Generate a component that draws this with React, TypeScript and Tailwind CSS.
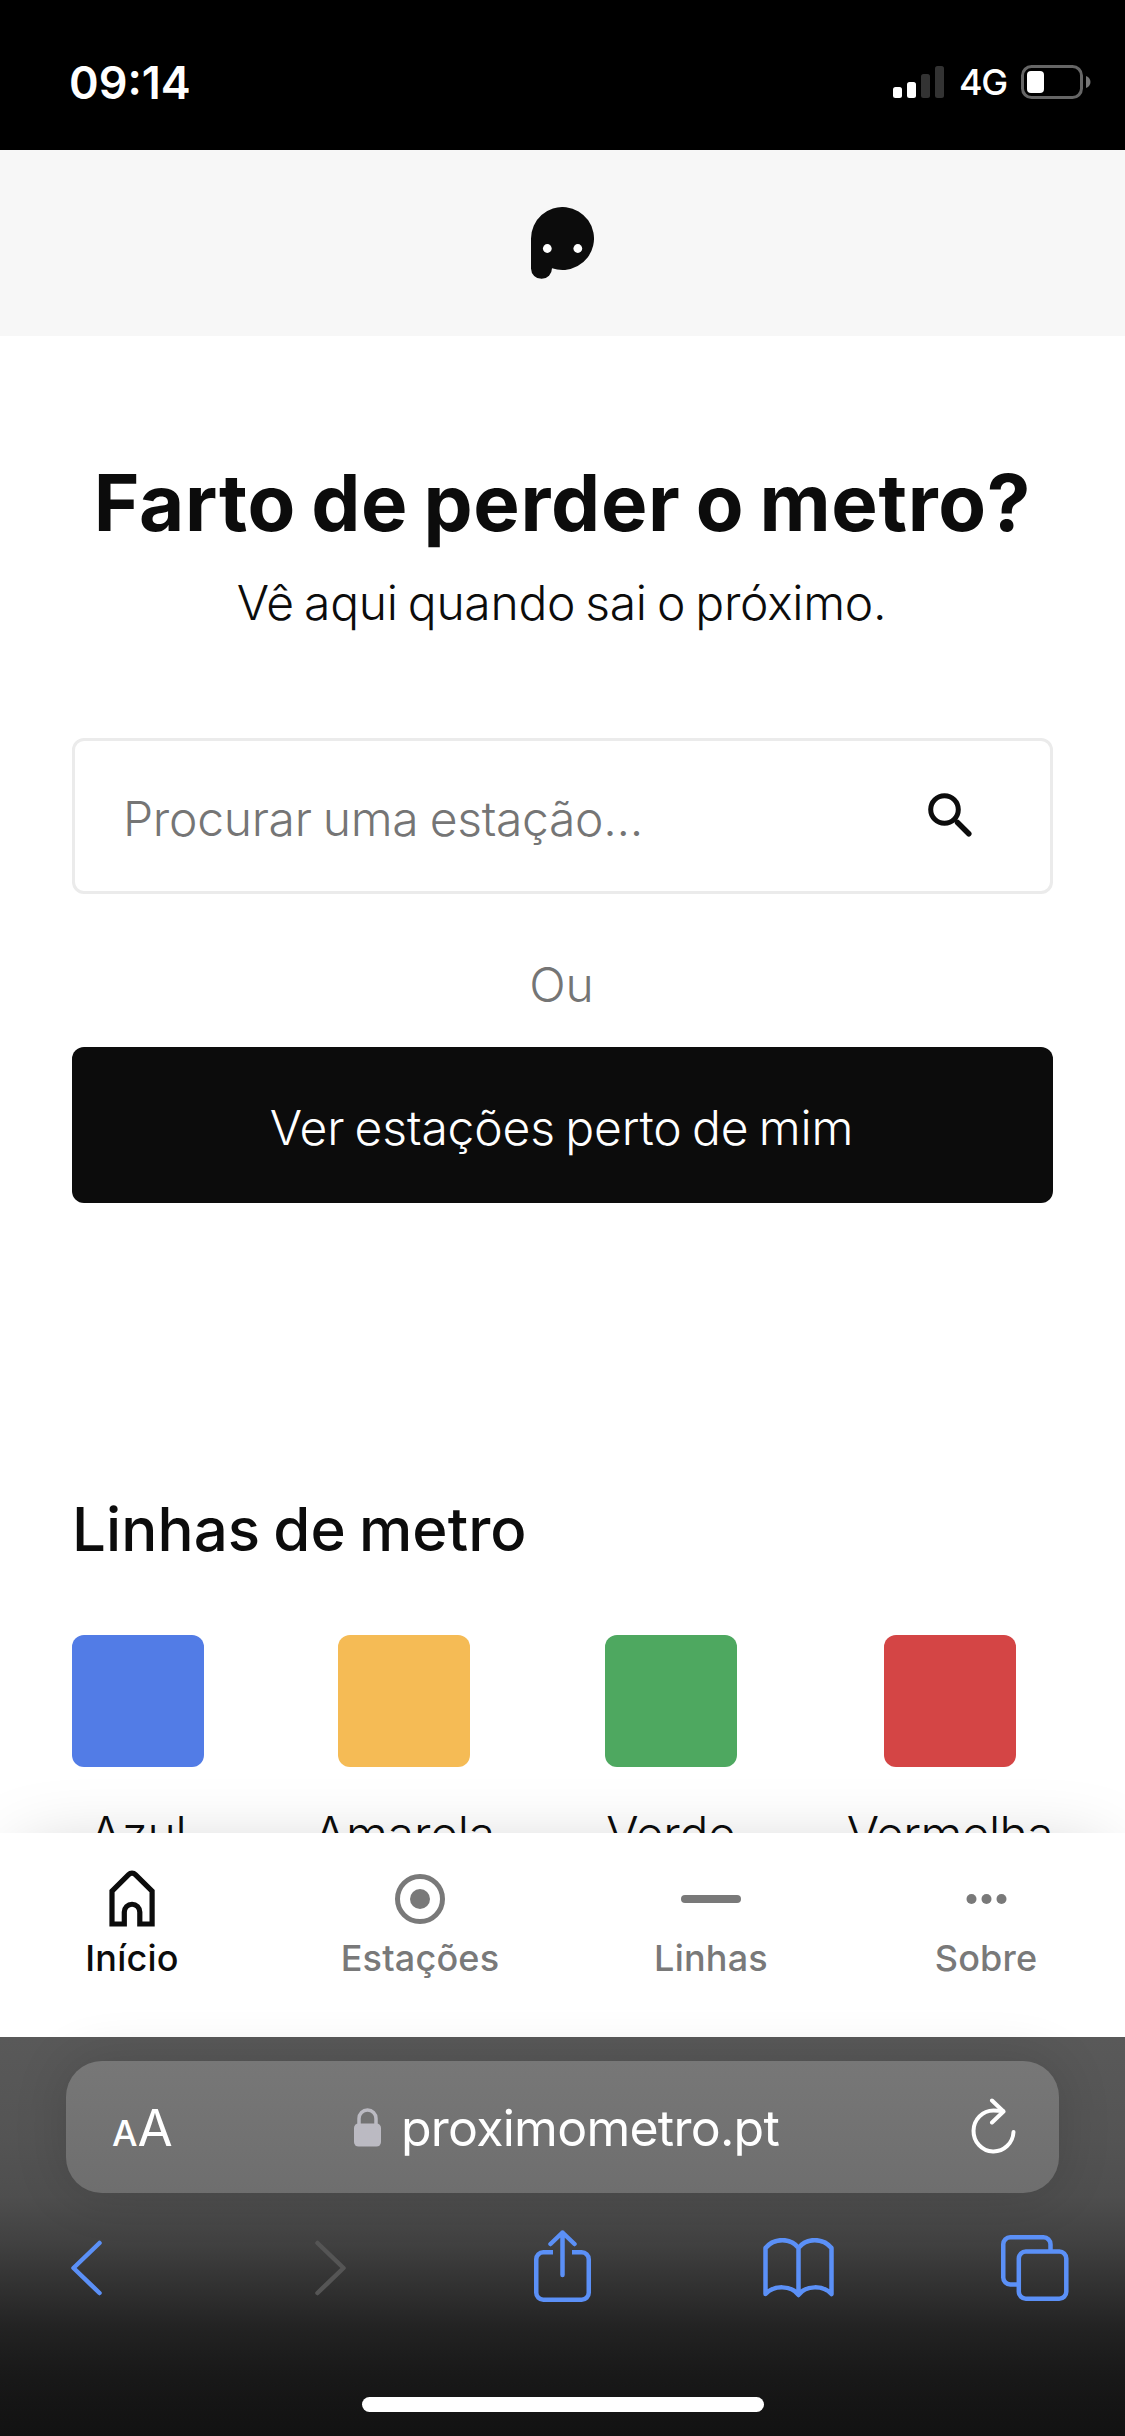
import type { ReactNode } from 'react';

const lines = [
  { name: 'Azul', color: 'bg-[#527ce6]', label: 'tracking-[-0.3px]' },
  { name: 'Amarela', color: 'bg-[#f5bb55]', label: 'tracking-[-0.2px]' },
  { name: 'Verde', color: 'bg-[#4ea860]', label: 'tracking-[-0.3px]' },
  { name: 'Vermelha', color: 'bg-[#d44545]', label: 'tracking-[-0.6px]' },
];

function StatusBar() {
  return (
    <div className="flex h-[150px] items-center bg-black pl-[69px] pr-[34px] pt-[14px] text-white">
      <span className="text-[45px] font-semibold leading-none">09:14</span>
      <div className="ml-auto flex items-center">
        <svg width="51" height="34" viewBox="0 0 51 34" className="mr-[15px]">
          <rect x="0" y="22" width="9" height="11" rx="2.5" fill="#fff" />
          <rect x="14" y="17" width="9" height="16" rx="2.5" fill="#fff" />
          <rect x="28" y="9" width="9" height="24" rx="2.5" fill="#333" />
          <rect x="42" y="1" width="9" height="32" rx="2.5" fill="#333" />
        </svg>
        <span className="w-[47px] whitespace-nowrap text-[36px] font-medium leading-none tracking-[-1.5px]">4G</span>
        <svg width="70" height="34" viewBox="0 0 70 34" className="ml-[15px]">
          <rect x="1.5" y="1.5" width="59" height="31" rx="9" fill="none" stroke="#666" strokeWidth="3" />
          <rect x="6" y="6" width="17" height="22" rx="4" fill="#fff" />
          <path d="M65 11c3 1 4.500 3.500 4.500 6s-1.500 5-4.500 6z" fill="#777" />
        </svg>
      </div>
    </div>
  );
}

function Logo() {
  return (
    <svg width="63" height="72" viewBox="0 0 63 72">
      <path d="M0 31.500a31.500 31.500 0 1 1 21 29.700A10.500 10.500 0 0 1 0 61.500z" fill="#0c0c0c" />
      <circle cx="16.300" cy="41.500" r="4.400" fill="#fff" />
      <circle cx="46.800" cy="41.500" r="4.400" fill="#fff" />
    </svg>
  );
}

interface NavItemProps {
  label: string;
  className: string;
  children: ReactNode;
}

function NavItem({ label, className, children }: NavItemProps) {
  return (
    <a className={`flex flex-col items-center whitespace-nowrap ${className}`}>
      <svg width="60" height="60" viewBox="0 0 60 60" fill="none">
        {children}
      </svg>
      <span className="mt-[7px] text-[36px] font-medium leading-[44px] tracking-[0.2px]">{label}</span>
    </a>
  );
}

function BottomNav() {
  return (
    <nav className="relative flex h-[204px] justify-between bg-white pl-[84px] pr-[75px] pt-[36px] shadow-[0_0_75px_-24px_rgba(0,0,0,0.25)]">
      <NavItem label="Início" className="w-[96px] text-[#0c0c0c]">
        <path
          d="M10 55V22.200L26.600 5.600a4.800 4.800 0 0 1 6.800 0L50.100 22.200V55H37.800V43a7.750 7.750 0 0 0-15.500 0V55z"
          stroke="currentColor"
          strokeWidth="5.200"
        />
      </NavItem>
      <NavItem label="Estações" className="w-[160px] text-[#797979]">
        <circle cx="30" cy="30" r="22.500" stroke="currentColor" strokeWidth="5" />
        <circle cx="30" cy="30" r="10" fill="currentColor" />
      </NavItem>
      <NavItem label="Linhas" className="w-[102px] text-[#797979]">
        <rect x="0" y="26" width="60" height="8" rx="4" fill="currentColor" />
      </NavItem>
      <NavItem label="Sobre" className="w-[128px] text-[#797979]">
        <circle cx="15.500" cy="30" r="5" fill="currentColor" />
        <circle cx="30.500" cy="30" r="5" fill="currentColor" />
        <circle cx="45.500" cy="30" r="5" fill="currentColor" />
      </NavItem>
    </nav>
  );
}

function BrowserBar() {
  return (
    <div className="relative h-[399px] bg-[linear-gradient(#595959_0px,#545454_100px,#4e4e4e_160px,#414141_205px,#313131_250px,#232323_290px,#1a1a1a_330px,#151515_365px,#121212_399px)] pt-6">
      <div className="mx-[66px] flex h-[132px] items-center rounded-[36px] bg-linear-to-b from-[#777777] to-[#6e6e6e] pl-[46px] pr-[43px] text-white shadow-[0_0_54px_rgba(0,0,0,0.14)]">
        <div className="flex w-[60px] items-baseline">
          <span className="text-[36px] font-medium leading-none">A</span>
          <span className="text-[51px] leading-none">A</span>
        </div>
        <svg width="27" height="40" viewBox="0 0 27 40" className="ml-[182px]">
          <path d="M5 18V11.500a8.500 8.500 0 0 1 17 0V18" fill="none" stroke="#bbbac2" strokeWidth="3.500" />
          <rect y="16.500" width="27" height="23" rx="4.500" fill="#bbbac2" />
        </svg>
        <span className="ml-[20px] whitespace-nowrap pt-[2px] text-[50px] leading-none tracking-[-0.75px]">proximometro.pt</span>
        <svg width="45" height="56" viewBox="0 0 45 56" className="mb-[2px] ml-auto" fill="none" stroke="#fff" strokeWidth="4" strokeLinecap="round" strokeLinejoin="round">
          <path d="M42.500 34a20 20.500 0 1 1-20-21.500q5 0 9.500.5" />
          <path d="M21 2.500l11.500 11L21 24.500" />
        </svg>
      </div>
      <div className="mt-[37px] flex h-[76px] items-center pl-[70px]">
        <svg width="33" height="56" viewBox="0 0 33 56" fill="none" stroke="#5b90f7" strokeWidth="4.500" strokeLinecap="round" strokeLinejoin="round">
          <path d="M29.500 3L3.500 28l26 25" />
        </svg>
        <svg width="33" height="56" viewBox="0 0 33 56" className="ml-[211px]" fill="none" stroke="#555" strokeWidth="4.500" strokeLinecap="round" strokeLinejoin="round">
          <path d="M3.500 3l26 25-26 25" />
        </svg>
        <svg width="57" height="72" viewBox="0 0 57 72" className="mb-1 ml-[187px]" fill="none" stroke="#5b90f7" strokeWidth="4.500">
          <path d="M19 22.250H9.250A7 7 0 0 0 2.250 29.250V62.750A7 7 0 0 0 9.250 69.750H47.750A7 7 0 0 0 54.750 62.750V29.250A7 7 0 0 0 47.750 22.250H38" />
          <path d="M28.500 45V2.500M16.500 14L28.500 2.500 40.500 14" strokeLinecap="round" strokeLinejoin="round" />
        </svg>
        <svg width="71" height="60" viewBox="0 0 71 60" className="ml-[172px]" fill="none" stroke="#5b90f7" strokeWidth="4.500" strokeLinejoin="round">
          <path d="M35.500 10C28-.5 11-.5 2.500 10V56C11 47 28 47 35.500 57 43 47 60 47 68.500 56V10C60-.5 43-.5 35.500 10zV57" />
        </svg>
        <svg width="68" height="66" viewBox="0 0 68 66" className="ml-[167px]" fill="none" stroke="#5b90f7" strokeWidth="4.500">
          <rect x="17.800" y="16.500" width="47.500" height="47.200" rx="7" />
          <path d="M18 49.500H9.250a7 7 0 0 1-7-7V9.250a7 7 0 0 1 7-7H42.500a7 7 0 0 1 7 7V16.500" />
        </svg>
      </div>
      <div className="mx-auto mt-[91px] h-[15px] w-[402px] rounded-full bg-white" />
    </div>
  );
}

export default function App() {
  return (
    <div className="h-[2436px] w-[1125px] overflow-hidden bg-white font-[Inter,sans-serif] text-[#0c0c0c]">
      <StatusBar />
      <header className="flex h-[186px] justify-center bg-[#f7f7f7] pt-[57px]">
        <Logo />
      </header>
      <main className="h-[1497px] overflow-hidden px-[72px] pt-[119px]">
        <h1 className="whitespace-nowrap text-center text-[78px] font-bold leading-[96px] tracking-[0.7px] [word-spacing:-4px]">
          Farto de perder o metro?
        </h1>
        <p className="mt-[22px] pr-[2px] text-center text-[48px] font-light leading-[60px] tracking-[-0.3px] [word-spacing:-3px]">
          Vê aqui quando sai o próximo.
        </p>
        <div className="mt-[105px] flex h-[156px] items-center rounded-xl border-[3px] border-[#ebebeb] pl-[48px] pr-[78px] text-[#757575]">
          <span className="pt-[5px] text-[48px] font-light leading-[60px] tracking-[-0.3px] [word-spacing:-2px]">
            Procurar uma estação...
          </span>
          <svg width="44" height="44" viewBox="0 0 44 44" className="mb-0.5 ml-auto" fill="none" stroke="#0c0c0c">
            <circle cx="16.500" cy="16.500" r="13.800" strokeWidth="5" />
            <path d="M29.500 29.500L40.800 40.800" strokeWidth="5.500" strokeLinecap="round" />
          </svg>
        </div>
        <p className="mt-[61px] pr-[2px] text-center text-[48px] font-light leading-[60px] text-[#757575]">Ou</p>
        <button className="mt-[32px] block h-[156px] w-full rounded-xl bg-[#0c0c0c] pr-[2px] pt-[5px] text-[48px] font-light leading-[60px] tracking-[-0.15px] text-white [word-spacing:-3px]">
          Ver estações perto de mim
        </button>
        <h2 className="mt-[290px] text-[60px] font-medium leading-[72px] tracking-[0.1px] [word-spacing:-3px]">Linhas de metro</h2>
        <div className="mt-[70px] flex justify-between">
          {lines.map((line) => (
            <div key={line.name} className="flex min-w-[132px] flex-col items-center">
              <div className={`size-[132px] rounded-xl ${line.color}`} />
              <span className={`mt-[37px] text-[48px] font-light leading-[60px] ${line.label}`}>{line.name}</span>
            </div>
          ))}
        </div>
      </main>
      <BottomNav />
      <BrowserBar />
    </div>
  );
}
